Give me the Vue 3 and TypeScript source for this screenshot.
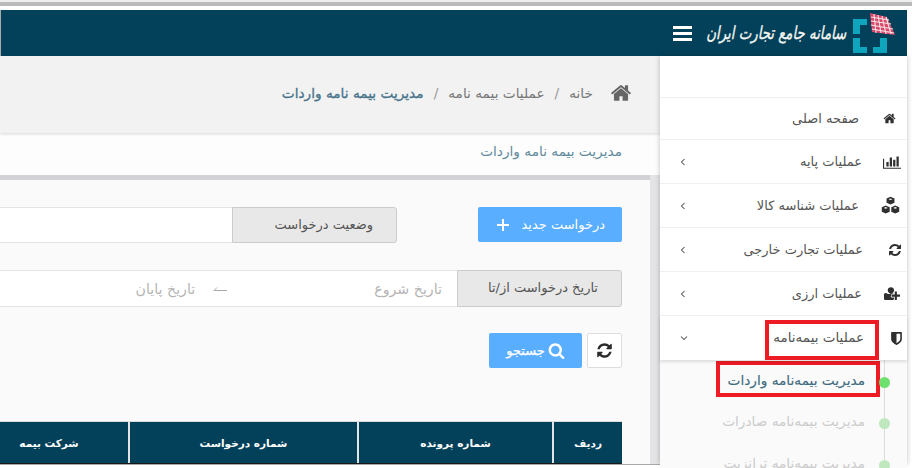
<script setup lang="ts">
interface Glyph { box: string; d: string }

const home: Glyph = { box: '0 0 1792 1792', d: 'M1472 992v480q0 26-19 45t-45 19h-384v-384h-256v384h-384q-26 0-45-19t-19-45v-480q0-1 .5-3t.5-3l575-474 575 474q1 2 1 6zm223-69l-62 74q-8 9-21 11h-3q-13 0-21-7l-692-577-692 577q-12 8-24 7-13-2-21-11l-62-74q-8-10-7-23.500t11-21.500l719-599q32-26 76-26t76 26l244 204v-195q0-14 9-23t23-9h192q14 0 23 9t9 23v408l219 182q10 8 11 21.500t-7 23.500z' }
const refresh: Glyph = { box: '0 0 1792 1792', d: 'M1639 1056q0 5-1 7-64 268-268 434.500t-478 166.500q-146 0-282.500-55t-243.500-157l-129 129q-19 19-45 19t-45-19-19-45v-448q0-26 19-45t45-19h448q26 0 45 19t19 45-19 45l-137 137q71 66 161 102t187 36q134 0 250-65t186-179q11-17 53-117 8-23 30-23h192q13 0 22.500 9.500t9.500 22.500zm25-800v448q0 26-19 45t-45 19h-448q-26 0-45-19t-19-45 19-45l138-138q-148-137-349-137-134 0-250 65t-186 179q-11 17-53 117-8 23-30 23h-199q-13 0-22.500-9.500t-9.500-22.500v-7q65-268 270-434.500t480-166.500q146 0 284 55.500t245 156.500l130-129q19-19 45-19t45 19 19 45z' }
const search: Glyph = { box: '0 0 1792 1792', d: 'M1216 832q0-185-131.500-316.500t-316.500-131.500-316.500 131.500-131.500 316.500 131.500 316.500 316.500 131.500 316.500-131.500 131.500-316.500zm512 832q0 52-38 90t-90 38q-54 0-90-38l-343-342q-179 124-399 124-143 0-273.500-55.500t-225-150-150-225-55.500-273.500 55.500-273.500 150-225 225-150 273.500-55.500 273.500 55.500 225 150 150 225 55.500 273.500q0 220-124 399l343 343q37 37 37 90z' }
const shield: Glyph = { box: '0 0 1792 1792', d: 'M1344 960v-640h-448v1137q119-63 213-137 235-184 235-360zm192-768v768q0 86-33.500 170.500t-83 150-118 127.500-126.500 103-121 77.500-89.500 49.500-42.500 20q-12 6-26 6t-26-6q-16-7-42.500-20t-89.500-49.500-121-77.500-126.500-103-118-127.500-83-150-33.500-170.500v-768q0-26 19-45t45-19h1152q26 0 45 19t19 45z' }
const userPlus: Glyph = { box: '0 0 2048 1792', d: 'M832 896q-159 0-271.500-112.500t-112.500-271.500 112.500-271.500 271.500-112.500 271.500 112.500 112.500 271.500-112.500 271.500-271.500 112.500zm720 128h352q13 0 22.500 9.500t9.500 22.500v192q0 13-9.500 22.500t-22.500 9.500h-352v352q0 13-9.500 22.500t-22.500 9.500h-192q-13 0-22.500-9.500t-9.500-22.500v-352h-352q-13 0-22.500-9.500t-9.500-22.500v-192q0-13 9.500-22.500t22.500-9.500h352v-352q0-13 9.500-22.500t22.500-9.500h192q13 0 22.500 9.500t9.500 22.500v352zm-736 224q0 52 38 90t90 38h256v238q-68 50-171 50h-874q-121 0-194-69t-73-190q0-53 3.500-103.500t14-109 26.500-108.500 43-97.500 62-81 85.500-53.500 111.500-20q19 0 39 17 79 61 154.500 91.500t164.500 30.500 164.500-30.500 154.500-91.500q20-17 39-17 132 0 217 96h-223q-26 0-45 19t-19 45z' }
const barChart: Glyph = { box: '0 0 2048 1792', d: 'M640 896v512h-256v-512h256zm384-512v1024h-256v-1024h256zm1024 1152v128h-2048v-1152h128v1024h1920zm-640-896v768h-256v-768h256zm384-384v1152h-256v-1152h256z' }
const cubes: Glyph = { box: '0 0 24 24', d: 'M12 1l5 2.200v5.300l-5 2.200-5-2.200v-5.300zM12 3l-2.500 1 2.500 1 2.500-1zM6 12l5 2.200v5.600l-5 2.200-5-2.200v-5.600zM6 14l-2.500 1 2.500 1 2.500-1zM18 12l5 2.200v5.600l-5 2.200-5-2.200v-5.600zM18 14l-2.500 1 2.500 1 2.500-1z' }

const menu = [
  { label: 'صفحه اصلی', icon: home, size: 13, pad: 10, gap: 22, arrow: false },
  { label: 'عملیات پایه', icon: barChart, size: 18, pad: 7, gap: 22, arrow: true },
  { label: 'عملیات شناسه کالا', icon: cubes, size: 19, pad: 9, gap: 23, arrow: true },
  { label: 'عملیات تجارت خارجی', icon: refresh, size: 14, pad: 4, gap: 24, arrow: true },
  { label: 'عملیات ارزی', icon: userPlus, size: 17, pad: 7, gap: 22, arrow: true },
]

const subMenu = [
  { label: 'مدیریت بیمه‌نامه واردات', active: true },
  { label: 'مدیریت بیمه‌نامه صادرات', active: false },
  { label: 'مدیریت بیمه‌نامه ترانزیت', active: false },
]

const columns = [
  { title: 'ردیف', width: 70 },
  { title: 'شماره پرونده', width: 195 },
  { title: 'شماره درخواست', width: 229 },
  { title: 'شرکت بیمه', width: 160 },
]
</script>

<template>
  <div class="shot" dir="rtl">
    <header class="topbar">
      <svg class="logo" viewBox="0 0 42 42">
        <path d="M0 7h14v6H7v9H0zM0 26h7v9h7v6H0zM27 26h7v15H20v-6h7z" fill="#0ea5bd" />
        <polygon points="17,1 34,5 42,23 19,20" fill="#d9486a" />
        <path d="M21 2l2 19M25 3l3 18M29 4l4 18M33 5l5 17M18 5l18 3M18 9l20 3M18 13l22 4M19 17l22 4" stroke="#fbe6ea" stroke-width="1.100" fill="none" />
      </svg>
      <span class="brand"><b>سامانه جامع تجارت ایران</b></span>
      <span class="burger"><i></i><i></i><i></i></span>
    </header>

    <div class="body">
      <aside class="sidebar">
        <div class="side-head"></div>
        <a v-for="item in menu" :key="item.label" class="nav-item" :style="{ paddingRight: item.pad + 'px' }">
          <span class="nav-icon"><svg :viewBox="item.icon.box" :width="item.size" :height="item.size"><path :d="item.icon.d" /></svg></span>
          <span class="nav-label" :style="{ marginRight: item.gap + 'px' }">{{ item.label }}</span>
          <svg v-if="item.arrow" class="chev" viewBox="0 0 8 10" width="6" height="8"><path d="M6 1L2 5l4 4" /></svg>
        </a>
        <a class="nav-item open">
          <span class="nav-icon"><svg :viewBox="shield.box" width="15" height="15"><path :d="shield.d" /></svg></span>
          <span class="nav-label picked">عملیات بیمه‌نامه</span>
          <svg class="chev" viewBox="0 0 10 8" width="8" height="6"><path d="M1 2l4 4 4-4" /></svg>
        </a>
        <div class="sub">
          <div v-for="entry in subMenu" :key="entry.label" class="sub-item" :class="{ on: entry.active }">
            <i class="dot"></i>
            <span class="sub-label">{{ entry.label }}</span>
          </div>
        </div>
      </aside>

      <main class="main">
        <div class="crumbs">
          <svg :viewBox="home.box" width="22" height="22" class="crumb-home"><path :d="home.d" /></svg>
          <span class="crumb">خانه</span>
          <span class="sep">/</span>
          <span class="crumb">عملیات بیمه نامه</span>
          <span class="sep">/</span>
          <span class="crumb current">مدیریت بیمه نامه واردات</span>
        </div>
        <div class="page-title">مدیریت بیمه نامه واردات</div>

        <section class="card">
          <div class="row first">
            <button class="btn-new">
              <span>درخواست جدید</span>
              <svg viewBox="0 0 12 12" width="12" height="12"><path d="M6 0v12M0 6h12" /></svg>
            </button>
            <div class="group status">
              <span class="addon">وضعیت درخواست</span>
              <span class="field"></span>
            </div>
          </div>

          <div class="group dates">
            <span class="addon">تاریخ درخواست از/تا</span>
            <span class="field">
              <span class="hint start">تاریخ شروع</span>
              <svg class="to" viewBox="0 0 14 6" width="14" height="6"><path d="M14 4.500H1L4 1.500" /></svg>
              <span class="hint end">تاریخ پایان</span>
            </span>
          </div>

          <div class="actions">
            <button class="btn-reset"><svg :viewBox="refresh.box" width="17" height="17"><path :d="refresh.d" /></svg></button>
            <button class="btn-search">
              <svg :viewBox="search.box" width="17" height="17"><path :d="search.d" /></svg>
              <span>جستجو</span>
            </button>
          </div>

          <div class="thead">
            <div v-for="col in columns" :key="col.title" class="th" :style="{ width: col.width + 'px' }">{{ col.title }}</div>
          </div>
        </section>
      </main>
    </div>
  </div>
</template>

<style scoped>
.shot {
  box-sizing: border-box;
  width: 912px;
  height: 468px;
  padding: 6px 5px 3px 0;
  background: linear-gradient(#eee 2px, #bbb 2px, #bbb 6px, #fff 6px);
  font-family: "DejaVu Sans", "Noto Sans", sans-serif;
  font-size: 13px;
  display: flex;
  flex-direction: column;
  overflow: hidden;
}

.topbar {
  flex: none;
  margin-top: 4px;
  height: 46px;
  background: #03415a;
  border-left: 1px solid #aaa;
  display: flex;
  align-items: center;
  padding-right: 12px;
  color: #fff;
}
.logo { width: 42px; height: 42px; flex: none; }
.brand {
  margin-right: 7px;
  width: 140px;
  flex: none;
  white-space: nowrap;
  font-size: 18px;
  font-style: italic;
  line-height: 1;
  color: #f4f6f1;
}
.brand b {
  display: inline-block;
  font-weight: normal;
  -webkit-text-stroke: 0.35px #f4f6f1;
  transform: scaleX(0.74);
  transform-origin: right center;
}
.burger {
  margin-right: 14px;
  width: 19px;
  flex: none;
  display: flex;
  flex-direction: column;
  gap: 3px;
}
.burger i { display: block; height: 3px; background: #fff; }

.body {
  flex: 1;
  min-height: 0;
  display: flex;
  border-left: 1px solid #aaa;
  border-bottom: 1px solid #aaa;
  background: #e4e4e6;
}

.sidebar {
  flex: none;
  width: 247px;
  background: #fff;
  box-shadow: 0 0 5px rgba(0, 0, 0, 0.25);
  position: relative;
  z-index: 2;
}
.side-head { height: 42px; border-bottom: 1px solid #f2f2f2; box-sizing: border-box; }
.nav-item {
  box-sizing: border-box;
  height: 44px;
  display: flex;
  align-items: center;
  padding: 0 10px 0 20px;
  border-bottom: 1px solid #f0f0f0;
  color: #555;
  position: relative;
}
.side-head + .nav-item { height: 42px; }
.nav-icon { width: 16px; display: flex; justify-content: center; flex: none; }
.nav-icon svg { fill: #2f2f2f; flex: none; }
.nav-label { white-space: nowrap; }
.chev {
  margin-right: auto;
  fill: none;
  stroke: #555;
  stroke-width: 1.4;
}
.open { border-bottom: 0; padding-right: 3px; box-shadow: 0 2px 3px rgba(0, 0, 0, 0.12); z-index: 1; }
.picked { position: relative; margin-right: 24px; font-size: 13.500px; top: -1px; }
.picked::after {
  content: "";
  position: absolute;
  inset: -9px -15px -15px -8px;
  border: 4px solid #ed1c24;
}

.sub { background: #fafafa; height: 110px; overflow: hidden; position: relative; }
.sub::before {
  content: "";
  position: absolute;
  top: 0;
  bottom: 0;
  right: 22px;
  width: 1px;
  background: #ddd;
}
.sub-item {
  height: 42px;
  display: flex;
  align-items: center;
  padding-right: 17px;
  color: #ccc;
  font-size: 13.700px;
}
.sub-item:first-child { height: 40px; }
.dot {
  width: 11px;
  height: 11px;
  border-radius: 50%;
  background: #bfe8bf;
  position: relative;
  z-index: 1;
  flex: none;
  margin-top: 4px;
}
.sub-label { margin-right: 14px; white-space: nowrap; }
.on { color: #3f6b80; }
.on .dot { background: #6de06d; }
.on .sub-label { position: relative; -webkit-text-stroke: 0.15px #3f6b80; }
.on .sub-label::after {
  content: "";
  position: absolute;
  inset: -11px -15px -9px -12px;
  border: 4px solid #ed1c24;
}

.main {
  flex: none;
  width: 660px;
  overflow: hidden;
  display: flex;
  flex-direction: column;
  font-size: 13.700px;
}

.crumbs {
  flex: none;
  height: 77px;
  box-sizing: border-box;
  background: #f2f2f2;
  display: flex;
  align-items: center;
  padding: 0 28px 3px 0;
  color: #777;
  box-shadow: 0 1px 3px rgba(0, 0, 0, 0.15);
  white-space: nowrap;
  position: relative;
}
.crumb-home { fill: #666; }
.crumb { margin-right: 17px; }
.sep { margin-right: 10px; color: #999; }
.sep + .crumb { margin-right: 10px; }
.current { color: #47738a; -webkit-text-stroke: 0.3px #47738a; }

.page-title {
  flex: none;
  height: 42px;
  line-height: 37px;
  padding-right: 38px;
  background: #fdfdfd;
  color: #5f8a9c;
}

.card {
  flex: 1;
  min-height: 0;
  margin: 5px 10px 0 0;
  padding: 27px 28px 0 0;
  background: #fafafa;
  box-shadow: 0 -5px 0 #d2d2d6;
  overflow: hidden;
}
.card > * { width: 900px; }

.row { display: flex; align-items: flex-start; }
.btn-new {
  width: 144px;
  height: 35px;
  border: 0;
  border-radius: 2px;
  background: #5aaeff;
  color: #fff;
  font: inherit;
  font-size: 13px;
  display: flex;
  align-items: center;
  justify-content: flex-start;
  gap: 12px;
  padding: 0 17px 0 0;
  flex: none;
}
.btn-new svg { fill: none; stroke: #fff; stroke-width: 2; }

.group { display: flex; height: 36px; }
.status { margin-right: 81px; flex: 1; }
.addon {
  box-sizing: border-box;
  flex: none;
  width: 165px;
  display: flex;
  align-items: center;
  padding: 0 23px 2px 0;
  background: #e8e8e8;
  border: 1px solid #ccc;
  border-radius: 0 3px 3px 0;
  color: #555;
  font-size: 13px;
}
.field {
  flex: 1;
  box-sizing: border-box;
  background: #fff;
  border: 1px solid #e4e4e4;
  border-right: 0;
  display: flex;
  align-items: center;
  color: #b5b5b5;
  font-size: 14.200px;
}

.dates { margin-top: 27px; height: 37px; }
.hint { white-space: nowrap; }
.start { margin-right: 15px; }
.to { margin-right: 147px; fill: none; stroke: #aaa; stroke-width: 1; flex: none; }
.end { margin-right: 18px; }

.actions { margin-top: 26px; display: flex; gap: 5px; }
.btn-reset {
  box-sizing: border-box;
  width: 35px;
  height: 35px;
  padding: 0;
  background: #fff;
  border: 1px solid #ddd;
  border-radius: 2px;
  display: flex;
  align-items: center;
  justify-content: center;
}
.btn-reset svg { fill: #2b2b2b; }
.btn-search {
  width: 93px;
  height: 35px;
  padding: 0;
  border: 0;
  border-radius: 2px;
  background: #5aaeff;
  color: #fff;
  font: inherit;
  font-size: 13px;
  -webkit-text-stroke: 0.25px #fff;
  display: flex;
  align-items: center;
  justify-content: center;
  gap: 3px;
}
.btn-search svg { fill: #fff; }

.thead {
  margin-top: 53px;
  display: flex;
  border-top: 1px solid #ddd;
  border-bottom: 2px solid #1a1a1a;
  height: 44px;
  box-sizing: border-box;
}
.th {
  box-sizing: border-box;
  height: 100%;
  flex: none;
  background: #03415a;
  color: #fff;
  font-size: 10.500px;
  font-weight: bold;
  display: flex;
  align-items: center;
  justify-content: center;
  border-left: 2px solid #e4e4e4;
}
</style>

<style>
html, body { margin: 0; background: #fff; overflow: hidden; }
</style>
